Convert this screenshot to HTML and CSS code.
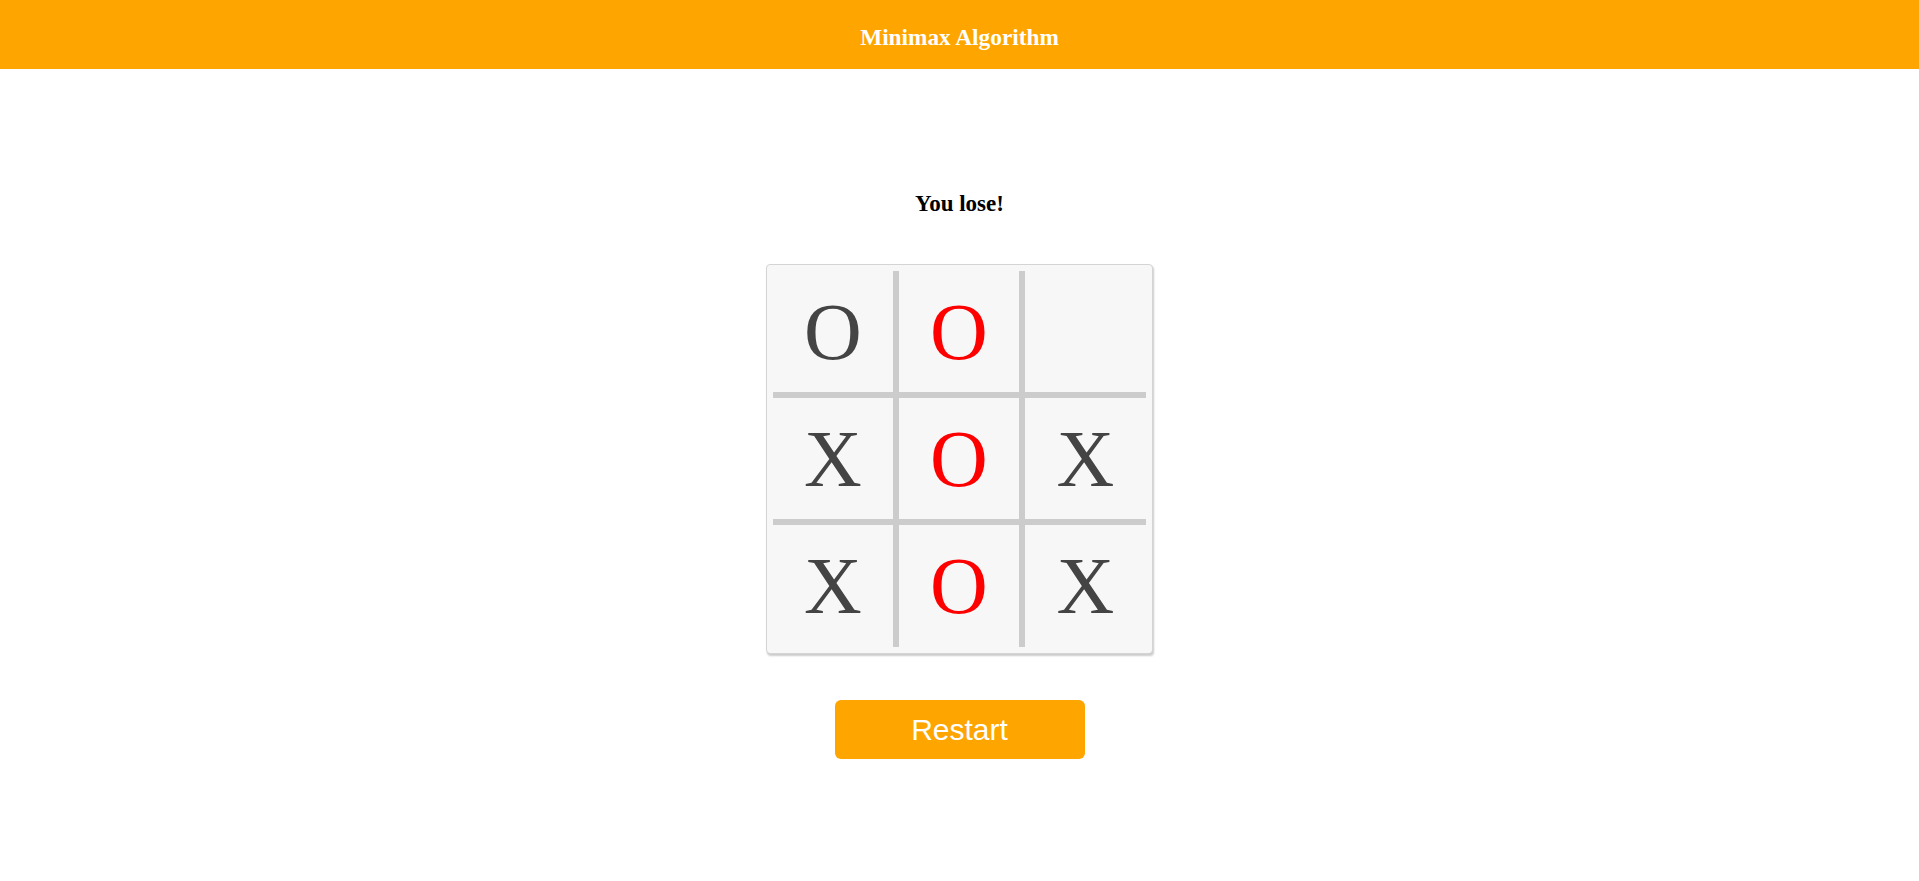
FILE: index.html
```html
<!DOCTYPE html>
<html>
<head>
<meta charset="utf-8">
<title>Minimax Algorithm</title>
<link rel="stylesheet" href="styles.css">
</head>
<body>
<header class="topbar">
  <h1 class="title">Minimax Algorithm</h1>
</header>
<main class="game">
  <h2 class="status">You lose!</h2>
  <div class="board">
    <div class="cell">O</div>
    <div class="cell win">O</div>
    <div class="cell"></div>
    <div class="cell">X</div>
    <div class="cell win">O</div>
    <div class="cell">X</div>
    <div class="cell">X</div>
    <div class="cell win">O</div>
    <div class="cell">X</div>
  </div>
  <button class="restart">Restart</button>
</main>
</body>
</html>
```

FILE: styles.css
```css
html, body {
  margin: 0;
  padding: 0;
  background: #ffffff;
}

body {
  font-family: "Liberation Serif", "Times New Roman", serif;
}

.topbar {
  height: 69px;
  background: #ffa500;
  display: flex;
  align-items: center;
  justify-content: center;
}

.title {
  margin: 0;
  padding-top: 6px;
  color: #ffffff;
  font-size: 23.3px;
  font-weight: bold;
  line-height: 27px;
}

.game {
  display: flex;
  flex-direction: column;
  align-items: center;
}

.status {
  margin: 122px 0 0 0;
  font-size: 23px;
  font-weight: bold;
  line-height: 25px;
  color: #000000;
}

.board {
  margin-top: 48px;
  display: grid;
  grid-template-columns: 120px 120px 121px;
  grid-template-rows: 121px 121px 122px;
  gap: 6px;
  padding: 6px;
  background: #f7f7f7;
  border: 1px solid #d4d4d4;
  border-radius: 4px;
  box-shadow: 1px 2px 2px #cccccc;
  background-clip: padding-box;
  position: relative;
}

.board::before {
  content: "";
  position: absolute;
  inset: 6px;
  background: #cccccc;
  z-index: 0;
}

.cell {
  position: relative;
  z-index: 1;
  background: #f7f7f7;
  display: flex;
  align-items: center;
  justify-content: center;
  font-size: 80px;
  line-height: 1;
  color: #444444;
}

.cell.win {
  color: #ff0000;
}

.restart {
  margin-top: 46px;
  width: 250px;
  height: 59px;
  border: none;
  border-radius: 6px;
  background: #ffa500;
  color: #ffffff;
  font-family: "Liberation Sans", Arial, sans-serif;
  font-size: 30px;
  padding: 0;
  cursor: pointer;
}
```
